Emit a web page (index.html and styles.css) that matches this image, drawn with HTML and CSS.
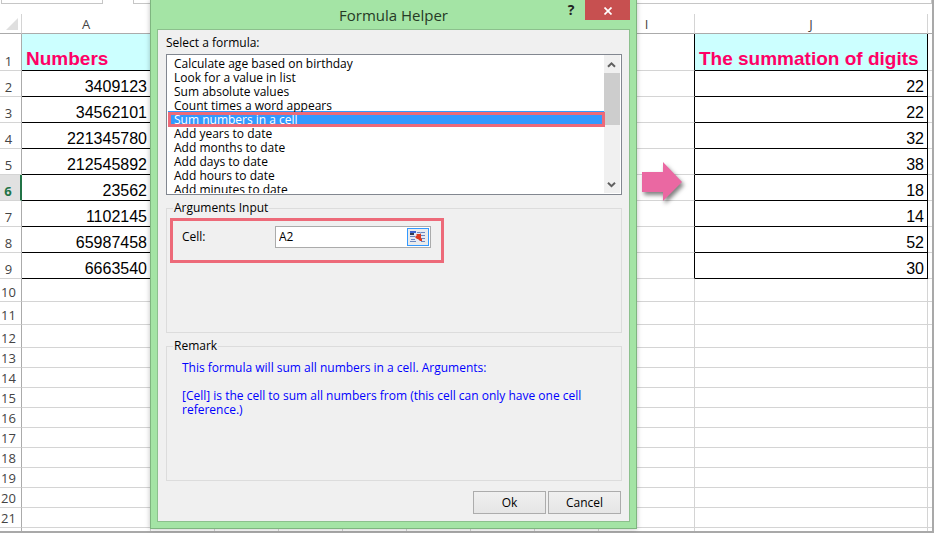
FILE: index.html
```html
<!DOCTYPE html>
<html lang="en">
<head>
<meta charset="utf-8">
<title>Formula Helper</title>
<link rel="stylesheet" href="styles.css">
</head>
<body>
<main class="workbook">
  <div class="formula-bar"><span class="name-box"></span><span class="formula-box"></span></div>
  <table class="sheet">
    <colgroup>
      <col class="c-head"><col class="c-a"><col class="c-std"><col class="c-std"><col class="c-std"><col class="c-std"><col class="c-std"><col class="c-std"><col class="c-std"><col class="c-i"><col class="c-j"><col>
    </colgroup>
    <thead>
      <tr><th class="corner"><svg width="12" height="12" viewBox="0 0 12 12"><path d="M12 0V12H0Z" fill="#dfdfdf"/></svg></th><th>A</th><th></th><th></th><th></th><th></th><th></th><th></th><th></th><th>I</th><th>J</th><th></th></tr>
    </thead>
    <tbody>
      <tr class="title"><th>1</th><td class="data">Numbers</td><td></td><td></td><td></td><td></td><td></td><td></td><td></td><td class="pre"></td><td class="data">The summation of digits</td><td></td></tr>
      <tr class="num"><th>2</th><td class="data">3409123</td><td></td><td></td><td></td><td></td><td></td><td></td><td></td><td class="pre"></td><td class="data">22</td><td></td></tr>
      <tr class="num"><th>3</th><td class="data">34562101</td><td></td><td></td><td></td><td></td><td></td><td></td><td></td><td class="pre"></td><td class="data">22</td><td></td></tr>
      <tr class="num"><th>4</th><td class="data">221345780</td><td></td><td></td><td></td><td></td><td></td><td></td><td></td><td class="pre"></td><td class="data">32</td><td></td></tr>
      <tr class="num"><th>5</th><td class="data">212545892</td><td></td><td></td><td></td><td></td><td></td><td></td><td></td><td class="pre"></td><td class="data">38</td><td></td></tr>
      <tr class="num active"><th>6</th><td class="data">23562</td><td></td><td></td><td></td><td></td><td></td><td></td><td></td><td class="pre"></td><td class="data">18</td><td></td></tr>
      <tr class="num"><th>7</th><td class="data">1102145</td><td></td><td></td><td></td><td></td><td></td><td></td><td></td><td class="pre"></td><td class="data">14</td><td></td></tr>
      <tr class="num"><th>8</th><td class="data">65987458</td><td></td><td></td><td></td><td></td><td></td><td></td><td></td><td class="pre"></td><td class="data">52</td><td></td></tr>
      <tr class="num"><th>9</th><td class="data">6663540</td><td></td><td></td><td></td><td></td><td></td><td></td><td></td><td class="pre"></td><td class="data">30</td><td></td></tr>
      <tr class="mid"><th>10</th><td></td><td></td><td></td><td></td><td></td><td></td><td></td><td></td><td></td><td></td><td></td></tr>
      <tr class="mid"><th>11</th><td></td><td></td><td></td><td></td><td></td><td></td><td></td><td></td><td></td><td></td><td></td></tr>
      <tr class="mid"><th>12</th><td></td><td></td><td></td><td></td><td></td><td></td><td></td><td></td><td></td><td></td><td></td></tr>
      <tr><th>13</th><td></td><td></td><td></td><td></td><td></td><td></td><td></td><td></td><td></td><td></td><td></td></tr>
      <tr><th>14</th><td></td><td></td><td></td><td></td><td></td><td></td><td></td><td></td><td></td><td></td><td></td></tr>
      <tr><th>15</th><td></td><td></td><td></td><td></td><td></td><td></td><td></td><td></td><td></td><td></td><td></td></tr>
      <tr><th>16</th><td></td><td></td><td></td><td></td><td></td><td></td><td></td><td></td><td></td><td></td><td></td></tr>
      <tr><th>17</th><td></td><td></td><td></td><td></td><td></td><td></td><td></td><td></td><td></td><td></td><td></td></tr>
      <tr><th>18</th><td></td><td></td><td></td><td></td><td></td><td></td><td></td><td></td><td></td><td></td><td></td></tr>
      <tr><th>19</th><td></td><td></td><td></td><td></td><td></td><td></td><td></td><td></td><td></td><td></td><td></td></tr>
      <tr><th>20</th><td></td><td></td><td></td><td></td><td></td><td></td><td></td><td></td><td></td><td></td><td></td></tr>
      <tr><th>21</th><td></td><td></td><td></td><td></td><td></td><td></td><td></td><td></td><td></td><td></td><td></td></tr>
      <tr class="rest"><th></th><td></td><td></td><td></td><td></td><td></td><td></td><td></td><td></td><td></td><td></td><td></td></tr>
    </tbody>
  </table>
</main>

<svg class="arrow" width="50" height="50" viewBox="0 0 50 50"><path d="M2 11H23V1L42 21L23 40V31H2Z" fill="#ea68a2"/></svg>

<section class="dialog" role="dialog" aria-labelledby="dlg-title">
  <header class="titlebar">
    <h1 id="dlg-title">Formula Helper</h1>
    <button class="help" type="button" aria-label="Help">?</button>
    <button class="close" type="button" aria-label="Close"><svg width="8" height="8" viewBox="0 0 8 8"><path d="M0.5 0.5L7.5 7.5M7.5 0.5L0.5 7.5" stroke="#fff" stroke-width="1.7"/></svg></button>
  </header>
  <form class="body">
    <label class="caption" for="formula">Select a formula:</label>
    <div class="listbox">
      <select id="formula" size="10">
        <option>Calculate age based on birthday</option>
        <option>Look for a value in list</option>
        <option>Sum absolute values</option>
        <option>Count times a word appears</option>
        <option selected>Sum numbers in a cell</option>
        <option>Add years to date</option>
        <option>Add months to date</option>
        <option>Add days to date</option>
        <option>Add hours to date</option>
        <option>Add minutes to date</option>
      </select>
      <div class="scrollbar">
        <svg width="16" height="17" viewBox="0 0 16 17"><path d="M4 10.8L7.5 7.3L11 10.8" fill="none" stroke="#606060" stroke-width="2"/></svg>
        <span class="thumb"></span>
        <svg width="16" height="17" viewBox="0 0 16 17"><path d="M4 6.7L7.5 10.2L11 6.7" fill="none" stroke="#606060" stroke-width="2"/></svg>
      </div>
      <span class="mark"></span>
    </div>
    <fieldset class="arguments">
      <legend>Arguments Input</legend>
      <div class="cell-row">
        <label for="cell">Cell:</label>
        <div class="ref-box">
          <input id="cell" type="text" value="A2">
          <button type="button" aria-label="Pick a cell"><svg width="16" height="12" viewBox="0 0 16 12"><path d="M0 0H15V11H0Z" fill="#e4e9f4"/><path d="M0 0H6V2H0Z" fill="#3a63cf"/><path d="M0 2H4V4H0Z" fill="#333c55"/><path d="M0 5H5V6H0ZM1 8H5V9H1ZM0 10H6V11H0ZM7 1H15V2H7ZM10 4H15V5H10ZM11 7H15V8H11ZM11 10H15V11H11Z" fill="#6c86bd"/><path d="M10 1H11V5H10Z" fill="#9aabd0"/><path d="M5 6L7 4L6 3H11V7L10 6L12 8V10H10L8 8L7 8Z" fill="#dc3a20"/></svg></button>
        </div>
      </div>
    </fieldset>
    <fieldset class="remark">
      <legend>Remark</legend>
      <p>This formula will sum all numbers in a cell. Arguments:</p>
      <p>[Cell] is the cell to sum all numbers from (this cell can only have one cell reference.)</p>
    </fieldset>
    <footer class="actions"><button type="button">Ok</button><button type="button">Cancel</button></footer>
  </form>
</section>
</body>
</html>
```
FILE: styles.css
```css
* { box-sizing: border-box; }

body {
  margin: 0;
  position: relative;
  overflow: hidden;
  background: #fff;
  font-family: "Open Sans", sans-serif;
  font-size: 12px;
  color: #000;
}

.workbook {
  border-right: 2px solid #a9a9a9;
  border-bottom: 2px solid #a9a9a9;
}

.formula-bar {
  display: flex;
  gap: 30px;
  height: 14px;
  padding: 0 0 10px 1px;
}
.name-box { width: 102px; }
.formula-box { flex: 1; }
.name-box, .formula-box {
  height: 4px;
  border: 1px solid #c6c6c6;
  border-top: 0;
}

.sheet {
  width: 100%;
  table-layout: fixed;
  border-collapse: separate;
  border-spacing: 0;
}
.c-head { width: 22px; }
.c-a { width: 129px; }
.c-std { width: 64px; }
.c-i { width: 96px; }
.c-j { width: 233px; }

.sheet tr { height: 20px; }
.sheet tr.title { height: 37px; }
.sheet tr.num { height: 26px; }
.sheet tr.mid { height: 23px; }
.sheet tr.rest { height: 3px; }

.sheet th, .sheet td {
  padding: 0;
  border-right: 1px solid #d4d4d4;
  border-bottom: 1px solid #d4d4d4;
  line-height: 18px;
  vertical-align: bottom;
}
.sheet th {
  font-weight: 400;
  font-size: 13px;
  color: #444;
}
.sheet tbody th { border-right-color: #ababab; padding-right: 4px; }
.sheet thead th { border-bottom-color: #ababab; }
.sheet .rest th, .sheet .rest td { border-bottom: 0; line-height: 0; }
.sheet td:last-child, .sheet th:last-child { border-right: 0; }
.corner svg { display: block; margin: 0 3px 3px auto; }

.sheet .data {
  border-color: #000;
  font-family: "Liberation Sans", sans-serif;
}
.sheet .pre { border-right-color: #000; }
.sheet .title .data {
  padding-left: 4px;
  background: #cff;
  color: #ff0066;
  font-size: 19px;
  font-weight: 700;
  line-height: 22px;
  white-space: nowrap;
}
.sheet .num .data {
  padding-right: 3px;
  text-align: right;
  font-size: 16px;
  line-height: 18px;
}
.sheet .active th {
  background: #e1e1e1;
  border-right: 2px solid #217346;
  color: #217346;
  font-weight: 700;
}

.arrow {
  position: absolute;
  left: 640px;
  top: 161px;
  filter: drop-shadow(2px 3px 2px rgba(0, 0, 0, 0.5));
}

.dialog {
  position: absolute;
  left: 150px;
  top: 0;
  width: 487px;
  padding: 0 6px 6px;
  border: 1px solid #7fb580;
  border-top: 0;
  background: #a4e4a5;
  box-shadow: 0 0 5px rgba(0, 0, 0, 0.25);
}
.titlebar {
  display: flex;
  align-items: flex-start;
  height: 29px;
}
.titlebar h1 {
  flex: 1;
  margin: 0;
  padding: 4px 0 0 66px;
  text-align: center;
  font-size: 15px;
  line-height: 22px;
  font-weight: 400;
  color: #263a26;
}
.titlebar button { border: 0; padding: 0; }
.help {
  width: 14px;
  margin-right: 7px;
  background: none;
  font: 700 14px/20px "Open Sans", sans-serif;
  color: #222;
}
.close {
  width: 45px;
  height: 20px;
  background: #c75050;
}

.body {
  padding: 6px 7px 7px 8px;
  border: 1px solid #8cc08d;
  background: #f0f0f0;
}
.caption { display: block; line-height: 14px; }

.listbox {
  position: relative;
  display: flex;
  height: 141px;
  margin-top: 4px;
  padding: 0 1px 1px;
  border: 1px solid #828790;
  background: #fff;
}
.listbox select {
  flex: 1;
  height: 138px;
  padding: 0;
  border: 0;
  outline: 0;
  border-radius: 0;
  overflow: hidden;
  background: #fff;
  font: 12px/14px "Open Sans", sans-serif;
  color: #000;
}
.listbox option {
  height: 14px;
  min-height: 14px;
  padding: 0 6px;
  line-height: 14px;
}
.listbox option:checked {
  background: linear-gradient(#3399ff, #3399ff);
  color: #fff;
}
.scrollbar {
  display: flex;
  flex-direction: column;
  justify-content: space-between;
  width: 16px;
  padding-top: 1px;
  background: #f0f0f0;
}
.scrollbar svg { display: block; }
.thumb { height: 52px; margin-bottom: auto; background: #cdcdcd; }
.mark {
  position: absolute;
  left: 1px;
  top: 57px;
  right: 16px;
  height: 15px;
  border: 3px solid #ed6a79;
}

fieldset {
  min-width: 0;
  margin: 0;
  border: 1px solid #dcdcdc;
}
legend { padding: 0 1px; line-height: 14px; }
.arguments {
  height: 132px;
  margin-top: 6px;
  padding: 3px 3px 0;
}
.arguments legend { margin-left: 3px; }
.cell-row {
  display: flex;
  align-items: flex-start;
  width: 274px;
  height: 45px;
  padding: 5px 10px 0 9px;
  border: 3px solid #ed6a79;
}
.cell-row label { flex: none; width: 93px; line-height: 22px; }
.ref-box {
  display: flex;
  flex: 1;
  min-width: 0;
  height: 22px;
  padding: 1px;
  border: 1px solid #ababab;
  background: #fff;
}
.ref-box input {
  flex: 1;
  min-width: 0;
  padding: 0 2px;
  border: 0;
  outline: 0;
  font: 12px/18px "Open Sans", sans-serif;
}
.ref-box button {
  display: flex;
  align-items: center;
  justify-content: center;
  width: 22px;
  height: 18px;
  padding: 0;
  border: 1px solid #3399ff;
  background: #ebebeb;
}
.remark {
  height: 142px;
  margin-top: 6px;
  padding: 8px 30px 0 15px;
  color: #0000ff;
}
.remark legend { margin-left: -9px; color: #000; }
.remark p { margin: 0 0 14px; line-height: 14px; }

.actions {
  display: flex;
  justify-content: flex-end;
  gap: 2px;
  margin-top: 10px;
  padding-right: 1px;
}
.actions button {
  width: 73px;
  height: 23px;
  padding: 0;
  border: 1px solid #acacac;
  background: linear-gradient(#f0f0f0, #e5e5e5);
  font: 12px/20px "Open Sans", sans-serif;
}
```
